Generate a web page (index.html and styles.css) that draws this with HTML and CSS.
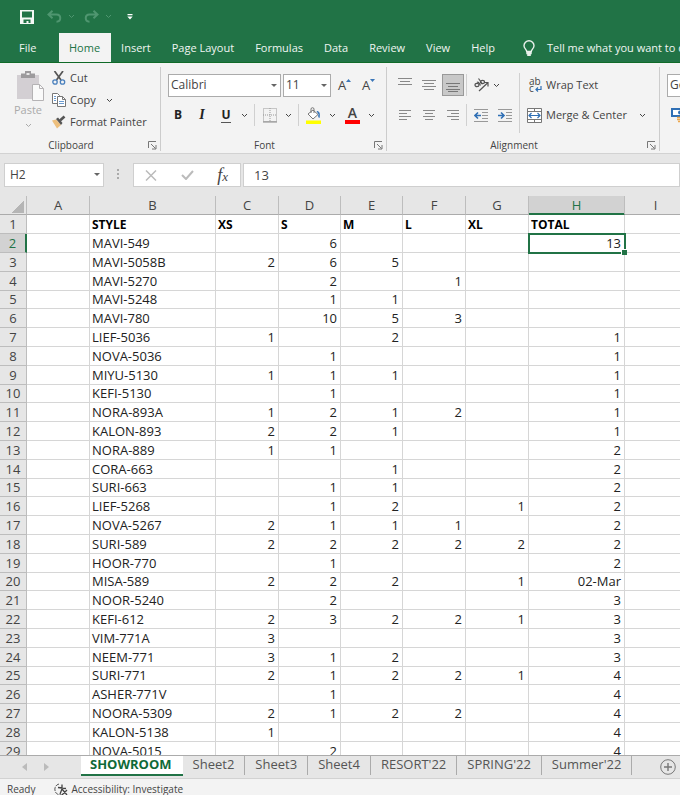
FILE: index.html
```
<!DOCTYPE html>
<html lang="en">
<head>
	<meta charset="UTF-8">
	<title>Showroom</title>
	<link rel="stylesheet" href="styles.css">
</head>
<body>
	<svg class="defs" width="0" height="0" aria-hidden="true">
		<symbol id="chev" viewBox="0 0 7 5"><path d="M1 1l2.500 2.500L6 1" fill="none" stroke="currentColor"/></symbol>
		<symbol id="launch" viewBox="0 0 9 9"><path d="M.5 7V.5H8M3 3l4.500 4.500M8 4v4H4" fill="none" stroke="#777"/></symbol>
	</svg>

	<header class="top">
		<div class="quick">
			<button class="save" aria-label="Save"><svg width="14" height="14" viewBox="0 0 14 14"><path d="M0 0h14v14H0z" fill="#f4f8f5"/><path d="M2 1.500h10v6H2zM3.500 9.500h7V13h-2v-2h-2v2h-3z" fill="#217346"/></svg></button>
			<button aria-label="Undo"><svg width="15" height="13" viewBox="0 0 15 13"><path d="M5.500 .8L1.500 4.500l4 3.700M2 4.500h7.500c5 0 5 7.200 0 7.200" fill="none" stroke="#4f9670" stroke-width="2"/></svg></button>
			<svg class="chev" width="7" height="5"><use href="#chev"/></svg>
			<button aria-label="Redo"><svg width="15" height="13" viewBox="0 0 15 13"><path d="M9.500 .8l4 3.700-4 3.700M13 4.500H5.500c-5 0-5 7.200 0 7.200" fill="none" stroke="#4f9670" stroke-width="2"/></svg></button>
			<svg class="chev" width="7" height="5"><use href="#chev"/></svg>
			<button class="custom" aria-label="Customize toolbar"><svg width="6" height="6" viewBox="0 0 6 6"><path d="M.5 0h5v1.300h-5zM.3 2.500h5.400L3 5.500z" fill="#fff"/></svg></button>
		</div>
		<nav class="menu">
			<a class="file" href="#">File</a>
			<a class="on" href="#">Home</a>
			<a href="#">Insert</a>
			<a href="#">Page Layout</a>
			<a href="#">Formulas</a>
			<a href="#">Data</a>
			<a href="#">Review</a>
			<a href="#">View</a>
			<a href="#">Help</a>
			<a class="tell" href="#"><svg width="12" height="17" viewBox="0 0 12 17"><path d="M3.700 11.500C3.700 9.500 1 8.500 1 5.700a5 5 0 0 1 10 0c0 2.800-2.700 3.800-2.700 5.800z" fill="none" stroke="#e9f1ec" stroke-width="1.400"/><path d="M3.300 11.500h5.400v2.700H7.800V16H4.200v-1.800h-.9z" fill="#e9f1ec"/></svg>Tell me what you want to do</a>
		</nav>
	</header>

	<div class="ribbon">
		<section class="group clipboard">
			<div class="tools">
				<button class="paste">
					<svg width="28" height="30" viewBox="0 0 28 30"><path d="M0 4h22v24H0z" fill="#d3cfd3"/><path d="M4 2.500h4V0h6v2.500h4V7H4z" fill="#9d9b9d"/><path d="M9.500 2h3v2h-3z" fill="#e8e8e8"/><path d="M15.500 13.500h7l4 4v12h-11z" fill="#fafafa" stroke="#b5b3b5"/><path d="M22.500 13.500v4h4" fill="none" stroke="#b5b3b5"/></svg>
					<span>Paste</span>
					<svg width="7" height="5"><use href="#chev"/></svg>
				</button>
				<div class="clips">
					<button><svg width="14" height="14" viewBox="0 0 14 14"><path d="M2.500 0l6.500 9M11 0L4.500 9" stroke="#555" stroke-width="1.700"/><circle cx="3" cy="11" r="2.200" fill="none" stroke="#4a80bd" stroke-width="1.300"/><circle cx="10.500" cy="11" r="2.200" fill="none" stroke="#4a80bd" stroke-width="1.300"/></svg>Cut</button>
					<button><svg width="14" height="14" viewBox="0 0 14 14"><path d="M.5 .5h5l2 2v8h-7z" fill="#fff" stroke="#777"/><path d="M5.500 3.500h5l3 3v7h-8z" fill="#fff" stroke="#777"/><path d="M10.500 3.500v3h3" fill="none" stroke="#777"/><path d="M2 3.500h2M2 5.500h2M2 7.500h2M7 8.500h5M7 10.500h5" stroke="#6b9bd0"/></svg>Copy<svg class="chev" width="7" height="5"><use href="#chev"/></svg></button>
					<button><svg width="14" height="14" viewBox="0 0 14 14"><path d="M0 5.500L4 4.500l5 5.500-4 3.500z" fill="#edbf7d"/><path d="M4 4l2-1.500L10.500 8 9 10z" fill="#555"/><path d="M8 5.500L12.500 1.500" stroke="#555" stroke-width="2.600"/></svg>Format Painter</button>
				</div>
			</div>
			<footer><span>Clipboard</span><button aria-label="Clipboard settings"><svg width="9" height="9"><use href="#launch"/></svg></button></footer>
		</section>

		<section class="group font">
			<div class="tools">
				<div class="row">
					<label class="drop family"><select aria-label="Font"><option>Calibri</option></select></label>
					<label class="drop size"><select aria-label="Font size"><option>11</option></select></label>
					<button class="grow" aria-label="Increase font size">A<svg width="5" height="3"><path d="M0 3L2.500 0 5 3z" fill="#3a76b8"/></svg></button>
					<button class="grow" aria-label="Decrease font size">A<svg width="5" height="3"><path d="M0 0h5L2.500 3z" fill="#3a76b8"/></svg></button>
				</div>
				<div class="row">
					<button class="b">B</button>
					<button class="i">I</button>
					<button class="u"><span>U</span></button>
					<button class="more" aria-label="Underline options"><svg width="7" height="5"><use href="#chev"/></svg></button>
					<i class="sep"></i>
					<button class="pic" aria-label="Borders"><svg width="14" height="15" viewBox="0 0 14 15"><path d="M.5 .5h13v13H.5zM7 0v14M0 7h14" fill="none" stroke="#999" stroke-dasharray="1 1"/><path d="M0 14h14" stroke="#888"/></svg></button>
					<button class="more" aria-label="Border options"><svg width="7" height="5"><use href="#chev"/></svg></button>
					<i class="sep"></i>
					<button class="pic" aria-label="Fill color"><svg width="15" height="17" viewBox="0 0 15 17"><path d="M2 7l5-4 5 4.500-5 4.500z" fill="#fff" stroke="#777"/><path d="M5 6V2.200a1.500 1.500 0 0 1 3 0V6" fill="none" stroke="#777"/><path d="M10.500 4c3 0 4 2.500 3 7-1 0-2-2-1-3.500z" fill="#3a76b8"/><path d="M0 13.500h15V17H0z" fill="#ffff00"/></svg></button>
					<button class="more" aria-label="Fill options"><svg width="7" height="5"><use href="#chev"/></svg></button>
					<button class="ink" aria-label="Font color">A</button>
					<button class="more" aria-label="Font color options"><svg width="7" height="5"><use href="#chev"/></svg></button>
				</div>
			</div>
			<footer><span>Font</span><button aria-label="Font settings"><svg width="9" height="9"><use href="#launch"/></svg></button></footer>
		</section>

		<section class="group align">
			<div class="tools">
				<div class="row">
					<button aria-label="Top align"><svg width="14" height="14"><path d="M0 .5h14M2 3.500h10M0 6.500h14" stroke="#888"/></svg></button>
					<button aria-label="Middle align"><svg width="14" height="14"><path d="M0 2.500h14M2 5.500h10M0 8.500h14M2 11.500h10" stroke="#888"/></svg></button>
					<button class="on" aria-label="Bottom align"><svg width="14" height="14"><path d="M0 5.500h14M2 8.500h10M0 11.500h14M2 13.500h10" stroke="#777"/></svg></button>
					<i class="sep"></i>
					<button class="wide" aria-label="Orientation"><svg width="15" height="14" viewBox="0 0 15 14"><g fill="none" stroke="#555" stroke-width="1.200"><ellipse cx="3" cy="7" rx="2" ry="1.700"/><path d="M3 4.500c1-1 2 0 3.500 3"/><ellipse cx="8.500" cy="4" rx="2" ry="1.700"/><path d="M4.500 .5L8.500 6"/><path d="M5 13L13.500 5M10 4.500h4v4"/></g></svg></button>
					<svg class="chev" width="7" height="5"><use href="#chev"/></svg>
				</div>
				<div class="row">
					<button aria-label="Align left"><svg width="12" height="10"><path d="M0 .5h12M0 3.500h8M0 6.500h12M0 9.500h8" stroke="#888"/></svg></button>
					<button aria-label="Center"><svg width="12" height="10"><path d="M0 .5h12M2 3.500h8M0 6.500h12M2 9.500h8" stroke="#888"/></svg></button>
					<button aria-label="Align right"><svg width="12" height="10"><path d="M0 .5h12M4 3.500h8M0 6.500h12M4 9.500h8" stroke="#888"/></svg></button>
					<i class="sep"></i>
					<button class="wide" aria-label="Decrease indent"><svg width="14" height="13"><path d="M0 .5h14M8 3.500h6M8 6.500h6M8 9.500h6M0 12.500h14" stroke="#999"/><path d="M7 6.500H1M4 3.500l-3 3 3 3" fill="none" stroke="#2f6fb5" stroke-width="1.600"/></svg></button>
					<button class="wide" aria-label="Increase indent"><svg width="14" height="13"><path d="M0 .5h14M8 3.500h6M8 6.500h6M8 9.500h6M0 12.500h14" stroke="#999"/><path d="M0 6.500h6M3 3.500l3 3-3 3" fill="none" stroke="#2f6fb5" stroke-width="1.600"/></svg></button>
				</div>
			</div>
			<div class="wraps">
				<button><span class="abc"><i>ab</i><i>c<svg width="7" height="6" viewBox="0 0 7 6"><path d="M6 0v3.500H1M3 1.500l-2 2 2 2" fill="none" stroke="#2f6fb5" stroke-width="1.200"/></svg></i></span>Wrap Text</button>
				<button><svg width="15" height="15" viewBox="0 0 15 15"><path d="M.5 .5h14v14H.5zM.5 3.500h14M.5 11.500h14M7.500 .5v3M7.500 11.500v3" fill="#fff" stroke="#777"/><path d="M2 7.500h11M4.500 5l-2.500 2.500L4.500 10M10.500 5L13 7.500 10.500 10" fill="none" stroke="#2f6fb5" stroke-width="1.200"/></svg>Merge &amp; Center<svg class="chev" width="7" height="5"><use href="#chev"/></svg></button>
			</div>
			<footer><span>Alignment</span><button aria-label="Alignment settings"><svg width="9" height="9"><use href="#launch"/></svg></button></footer>
		</section>

		<section class="group number">
			<div class="tools">
				<div class="row">
					<label class="drop format"><select aria-label="Number format"><option>General</option></select></label>
				</div>
				<div class="row">
					<button class="pic" aria-label="Accounting format"><svg width="18" height="16" viewBox="0 0 18 16"><path d="M1 2h16v7H1z" fill="#fff" stroke="#2f6fb5" stroke-width="2"/><circle cx="9" cy="5.500" r="2" fill="#2f6fb5"/><path d="M6 10.500h9M6 12.500h9M7 14.500h8" stroke="#eda74d" stroke-width="1.400"/></svg></button>
				</div>
			</div>
		</section>
	</div>

	<div class="formula">
		<label class="drop name"><input type="text" value="H2" aria-label="Name box"></label>
		<svg class="dots" width="3" height="12"><path d="M0 0h2v2H0zM0 4h2v2H0zM0 8h2v2H0z" fill="#aaa"/></svg>
		<div class="fx">
			<button aria-label="Cancel"><svg width="12" height="11"><path d="M1 .5l10 10M11 .5l-10 10" stroke="#bbb" stroke-width="1.500"/></svg></button>
			<button aria-label="Enter"><svg width="13" height="10"><path d="M1 5l4 4 7-8" fill="none" stroke="#bbb" stroke-width="2"/></svg></button>
			<button class="fn">f<small>x</small></button>
		</div>
		<input class="value" type="text" value="13" aria-label="Formula">
	</div>

	<main class="grid">
		<table>
			<colgroup><col class="n"><col class="a"><col class="style"><col class="q"><col class="q2"><col class="q2"><col class="q"><col class="q"><col class="total"><col></colgroup>
			<thead>
				<tr><th class="corner"></th><th>A</th><th>B</th><th>C</th><th>D</th><th>E</th><th>F</th><th>G</th><th class="on">H</th><th>I</th></tr>
			</thead>
			<tbody>
				<tr class="head"><th>1</th><td></td><td>STYLE</td><td>XS</td><td>S</td><td>M</td><td>L</td><td>XL</td><td>TOTAL</td><td></td></tr>
				<tr><th class="on">2</th><td></td><td>MAVI-549</td><td></td><td>6</td><td></td><td></td><td></td><td class="active">13</td><td></td></tr>
				<tr><th>3</th><td></td><td>MAVI-5058B</td><td>2</td><td>6</td><td>5</td><td></td><td></td><td></td><td></td></tr>
				<tr><th>4</th><td></td><td>MAVI-5270</td><td></td><td>2</td><td></td><td>1</td><td></td><td></td><td></td></tr>
				<tr><th>5</th><td></td><td>MAVI-5248</td><td></td><td>1</td><td>1</td><td></td><td></td><td></td><td></td></tr>
				<tr><th>6</th><td></td><td>MAVI-780</td><td></td><td>10</td><td>5</td><td>3</td><td></td><td></td><td></td></tr>
				<tr><th>7</th><td></td><td>LIEF-5036</td><td>1</td><td></td><td>2</td><td></td><td></td><td>1</td><td></td></tr>
				<tr><th>8</th><td></td><td>NOVA-5036</td><td></td><td>1</td><td></td><td></td><td></td><td>1</td><td></td></tr>
				<tr><th>9</th><td></td><td>MIYU-5130</td><td>1</td><td>1</td><td>1</td><td></td><td></td><td>1</td><td></td></tr>
				<tr><th>10</th><td></td><td>KEFI-5130</td><td></td><td>1</td><td></td><td></td><td></td><td>1</td><td></td></tr>
				<tr><th>11</th><td></td><td>NORA-893A</td><td>1</td><td>2</td><td>1</td><td>2</td><td></td><td>1</td><td></td></tr>
				<tr><th>12</th><td></td><td>KALON-893</td><td>2</td><td>2</td><td>1</td><td></td><td></td><td>1</td><td></td></tr>
				<tr><th>13</th><td></td><td>NORA-889</td><td>1</td><td>1</td><td></td><td></td><td></td><td>2</td><td></td></tr>
				<tr><th>14</th><td></td><td>CORA-663</td><td></td><td></td><td>1</td><td></td><td></td><td>2</td><td></td></tr>
				<tr><th>15</th><td></td><td>SURI-663</td><td></td><td>1</td><td>1</td><td></td><td></td><td>2</td><td></td></tr>
				<tr><th>16</th><td></td><td>LIEF-5268</td><td></td><td>1</td><td>2</td><td></td><td>1</td><td>2</td><td></td></tr>
				<tr><th>17</th><td></td><td>NOVA-5267</td><td>2</td><td>1</td><td>1</td><td>1</td><td></td><td>2</td><td></td></tr>
				<tr><th>18</th><td></td><td>SURI-589</td><td>2</td><td>2</td><td>2</td><td>2</td><td>2</td><td>2</td><td></td></tr>
				<tr><th>19</th><td></td><td>HOOR-770</td><td></td><td>1</td><td></td><td></td><td></td><td>2</td><td></td></tr>
				<tr><th>20</th><td></td><td>MISA-589</td><td>2</td><td>2</td><td>2</td><td></td><td>1</td><td>02-Mar</td><td></td></tr>
				<tr><th>21</th><td></td><td>NOOR-5240</td><td></td><td>2</td><td></td><td></td><td></td><td>3</td><td></td></tr>
				<tr><th>22</th><td></td><td>KEFI-612</td><td>2</td><td>3</td><td>2</td><td>2</td><td>1</td><td>3</td><td></td></tr>
				<tr><th>23</th><td></td><td>VIM-771A</td><td>3</td><td></td><td></td><td></td><td></td><td>3</td><td></td></tr>
				<tr><th>24</th><td></td><td>NEEM-771</td><td>3</td><td>1</td><td>2</td><td></td><td></td><td>3</td><td></td></tr>
				<tr><th>25</th><td></td><td>SURI-771</td><td>2</td><td>1</td><td>2</td><td>2</td><td>1</td><td>4</td><td></td></tr>
				<tr><th>26</th><td></td><td>ASHER-771V</td><td></td><td>1</td><td></td><td></td><td></td><td>4</td><td></td></tr>
				<tr><th>27</th><td></td><td>NOORA-5309</td><td>2</td><td>1</td><td>2</td><td>2</td><td></td><td>4</td><td></td></tr>
				<tr><th>28</th><td></td><td>KALON-5138</td><td>1</td><td></td><td></td><td></td><td></td><td>4</td><td></td></tr>
				<tr><th>29</th><td></td><td>NOVA-5015</td><td></td><td>2</td><td></td><td></td><td></td><td>4</td><td></td></tr>
			</tbody>
		</table>
	</main>

	<div class="sheets">
		<div class="arrows">
			<button aria-label="Previous sheet"><svg width="5" height="8"><path d="M5 0v8L0 4z" fill="#bbb"/></svg></button>
			<button aria-label="Next sheet"><svg width="5" height="8"><path d="M0 0v8l5-4z" fill="#bbb"/></svg></button>
		</div>
		<button class="tab on">SHOWROOM</button>
		<button class="tab">Sheet2</button>
		<button class="tab">Sheet3</button>
		<button class="tab">Sheet4</button>
		<button class="tab">RESORT'22</button>
		<button class="tab">SPRING'22</button>
		<button class="tab">Summer'22</button>
		<button class="add" aria-label="New sheet"><svg width="16" height="16"><circle cx="8" cy="8" r="7.300" fill="none" stroke="#777"/><path d="M8 4v8M4 8h8" stroke="#777" stroke-width="1.400"/></svg></button>
	</div>

	<footer class="status">
		<span>Ready</span>
		<button><svg width="15" height="13" viewBox="0 0 15 13"><path d="M5 1C1 2 0 6 1.500 9S6 12 7.500 11.500" fill="none" stroke="#555" stroke-dasharray="4 1"/><path d="M4 4.500l8 1M8 1.500v4M8 6l-2 5M8 6l5 6M13 7l-5 5" fill="none" stroke="#444" stroke-width="1.300"/></svg>Accessibility: Investigate</button>
	</footer>
</body>
</html>
```
FILE: styles.css
```
*{
	box-sizing: border-box;
}

body{
	margin: 0;
	height: 100vh;
	display: flex;
	flex-direction: column;
	overflow: hidden;
	background: #e6e6e6;
	color: #444;
	font: 11px/16px "Open Sans", "Noto Sans", sans-serif;
}

button, input, select{
	margin: 0;
	padding: 0;
	border: 0;
	background: none;
	color: inherit;
	font: inherit;
}

button{
	display: flex;
	align-items: center;
	justify-content: center;
	flex-shrink: 0;
	white-space: nowrap;
}

svg{
	display: block;
	flex-shrink: 0;
}

svg.defs{
	position: absolute;
}

/* title bar and menu */
.top{
	background: #217346;
	color: #f0f5f2;
}

.quick{
	display: flex;
	align-items: center;
	height: 33px;
	padding-left: 20px;
	color: #4f9670;
}

.quick .save{
	margin-right: 13px;
}

.quick .chev{
	margin: 0 9px 0 6px;
}

.quick .custom{
	margin-left: 6px;
}

.menu{
	display: flex;
	height: 30px;
	overflow: hidden;
	border-bottom: 1px solid #0f6a28;
}

.menu a{
	display: flex;
	align-items: center;
	flex-shrink: 0;
	height: 30px;
	padding: 0 11px 0 10px;
	color: inherit;
	font-weight: 500;
	text-decoration: none;
	white-space: nowrap;
}

.menu a.file{
	width: 59px;
	padding-left: 19px;
}

.menu a.on{
	background: #f3f3f3;
	color: #217346;
}

.menu a.tell{
	gap: 12px;
	padding-left: 17px;
}

/* ribbon */
.ribbon{
	display: flex;
	flex-shrink: 0;
	height: 91px;
	overflow: hidden;
	background: #f3f3f3;
	border-bottom: 1px solid #d2d2d2;
}

.group{
	display: grid;
	grid-template-rows: 1fr 12px;
	flex-shrink: 0;
	margin: 4px 0 2px;
	border-right: 1px solid #ccc;
}

.group footer{
	display: flex;
	align-items: center;
	grid-column: 1 / -1;
	padding-right: 3px;
	font-size: 10px;
}

.group footer span{
	flex: 1;
	padding-left: 8px;
	padding-right: 14px;
	text-align: center;
}

.clipboard{
	width: 161px;
}

.clipboard .tools{
	display: flex;
}

.paste{
	flex-direction: column;
	justify-content: flex-start;
	width: 52px;
	padding: 4px 0 0 9px;
	color: #aaa;
}

.paste span{
	margin-right: 5px;
	line-height: 18px;
}

.paste svg:last-child{
	margin: 4px 5px 0 0;
}

.clips button{
	gap: 4px;
	height: 22px;
}

.clips .chev{
	margin-left: 6px;
}

.row{
	display: flex;
	align-items: center;
	height: 36px;
}

.row:first-child{
	height: 30px;
	padding-top: 6px;
}

.font{
	width: 226px;
}

.font .row{
	padding-left: 5px;
}

.font .row:first-child{
	gap: 2px;
	padding-left: 7px;
}

.drop{
	position: relative;
	display: block;
	height: 23px;
	background: #fff;
	border: 1px solid #ababab;
	font-size: 12px;
}

.drop select, .drop input{
	display: block;
	width: 100%;
	height: 21px;
	padding-left: 2px;
	appearance: none;
}

.drop::after{
	content: "";
	position: absolute;
	top: 9px;
	right: 3px;
	border: 3px solid transparent;
	border-top-color: #666;
}

.family{
	width: 113px;
}

.size{
	width: 48px;
}

.grow{
	align-items: flex-start;
	width: 21px;
	margin-left: 1px;
	font-size: 13px;
}

.grow svg{
	margin-top: 2px;
}

.b, .i, .u{
	width: 24px;
	color: #222;
	font-size: 12px;
	font-weight: 700;
}

.i{
	font-family: "Liberation Serif", serif;
	font-size: 14px;
	font-style: italic;
}

.u span{
	border-bottom: 1px solid #555;
	line-height: 14px;
}

.more{
	width: 12px;
	margin-right: 4px;
}

.sep{
	width: 1px;
	height: 22px;
	background: #d0d0d0;
}

.pic{
	width: 21px;
	margin: 0 2px 0 4px;
}

.ink{
	width: 15px;
	height: 17px;
	margin: 0 5px 0 3px;
	border-bottom: 4px solid #f00;
	font-size: 14px;
	font-weight: 600;
	line-height: 12px;
}

.align{
	grid-template-columns: 132px 1fr;
	width: 273px;
}

.align .row{
	padding-left: 6px;
}

.align .row button{
	width: 22px;
	height: 22px;
	margin: 0 1px;
}

.align .row button.on{
	background: #c8c8c8;
	border: 1px solid #999;
}

.align .sep{
	margin: 0 2px 0 1px;
}

.wraps{
	margin: 6px 0;
	padding-left: 7px;
	border-left: 1px solid #d0d0d0;
}

.wraps button{
	gap: 4px;
	height: 24px;
}

.wraps button:last-child{
	margin-top: 6px;
}

.wraps .chev{
	margin-left: 8px;
}

.abc{
	width: 15px;
	padding-left: 2px;
	font-size: 10px;
	line-height: 7px;
	text-align: left;
}

.abc i{
	display: flex;
	align-items: center;
	gap: 1px;
	font-style: normal;
}

.number{
	flex: 1 0 130px;
	padding-left: 7px;
}

.format{
	width: 110px;
}

.number .pic{
	margin-left: 2px;
}

/* formula bar */
.formula{
	display: flex;
	align-items: center;
	flex-shrink: 0;
	height: 42px;
	padding-left: 4px;
	font-size: 13px;
}

.formula .drop, .fx, .value{
	height: 24px;
	background: #fff;
	border: 1px solid #cfcfcf;
}

.name{
	width: 100px;
}

.name input{
	padding-left: 5px;
}

.dots{
	margin: 0 13px;
}

.fx{
	display: flex;
	align-items: center;
	justify-content: space-between;
	width: 108px;
	margin-right: 2px;
	padding: 0 12px 0 11px;
}

.fn{
	font: italic 18px/20px "Liberation Serif", serif;
}

.fn small{
	font-size: 13px;
	padding-top: 4px;
}

.value{
	flex: 1;
	min-width: 0;
	padding-left: 10px;
}

/* cells */
.grid{
	flex: 1;
	min-height: 0;
	overflow: hidden;
	background: #fff;
}

table{
	width: 100%;
	min-width: 687px;
	table-layout: fixed;
	border-collapse: separate;
	border-spacing: 0;
	font-size: 13px;
	line-height: 17px;
}

col.n{
	width: 27px;
}

col.a{
	width: 63px;
}

col.style{
	width: 126px;
}

col.q{
	width: 63px;
}

col.q2{
	width: 62px;
}

col.total{
	width: 96px;
}

tr{
	height: 19px;
}

tbody tr:nth-child(5n){
	height: 18px;
}

th, td{
	padding: 0 3px 0 2px;
	border: 0 solid #d6d6d6;
	border-width: 0 1px 1px 0;
	white-space: nowrap;
}

th{
	padding: 0;
	background: #e6e6e6;
	border-color: #bdbdbd;
	font-weight: 400;
}

thead th{
	border-bottom-color: #ababab;
}

th.on{
	background: #d2d2d2;
	color: #217346;
}

thead th.on{
	box-shadow: inset 0 -1px #217346;
	border-bottom-color: #217346;
}

tbody th.on{
	border-right: 2px solid #217346;
}

.corner{
	background: linear-gradient(135deg, transparent 50%, #b5b5b5 50%) 12px 5px / 12px 12px no-repeat #e6e6e6;
}

td{
	color: #222;
	text-align: right;
}

td:nth-child(3), .head td{
	text-align: left;
}

.head td{
	color: #000;
	font-size: 12px;
	font-weight: 700;
}

.active{
	position: relative;
	outline: 2px solid #217346;
	outline-offset: -1px;
}

.active::after{
	content: "";
	position: absolute;
	right: -3px;
	bottom: -3px;
	width: 5px;
	height: 5px;
	background: #217346;
	border: 1px solid #fff;
	border-width: 1px 0 0 1px;
}

/* sheet tabs */
.sheets{
	display: flex;
	flex-shrink: 0;
	height: 24px;
	border-top: 1px solid #ababab;
	border-bottom: 1px solid #d2d2d2;
	background: #e6e6e6;
	color: #555;
	font-size: 13px;
}

.arrows{
	display: flex;
	gap: 17px;
	width: 81px;
	padding-left: 22px;
}

.tab{
	height: 19px;
	padding: 0 10px 4px;
	border-right: 1px solid #ababab;
}

.tab.on{
	height: 20px;
	padding: 0 11px 3px 9px;
	background: #fff;
	border-right: 0;
	border-bottom: 2px solid #217346;
	color: #0f6a38;
	font-weight: 700;
}

.add{
	margin-left: 28px;
}

/* status bar */
.status{
	display: flex;
	align-items: center;
	flex-shrink: 0;
	gap: 19px;
	height: 16px;
	padding: 4px 0 0 7px;
	background: #f3f3f3;
	font-size: 10px;
}

.status button{
	gap: 2px;
}
```
